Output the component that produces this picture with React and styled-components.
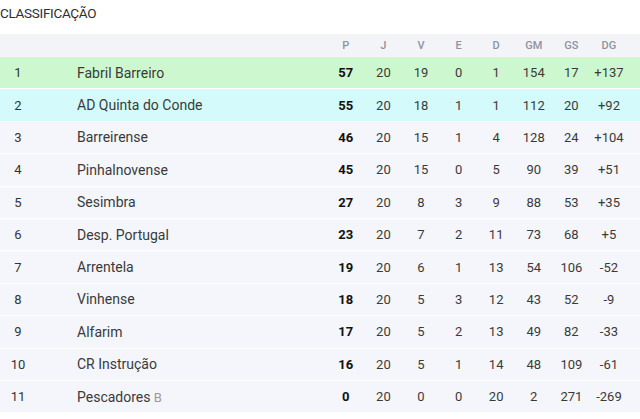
import React from 'react'
import styled, { createGlobalStyle } from 'styled-components'

const GlobalStyle = createGlobalStyle`
  body {
    margin: 0;
    background: #fff;
    font-family: Roboto, "Liberation Sans", sans-serif;
    color: #333;
  }
`

const Wrap = styled.div`
  width: 640px;
`

const Title = styled.h2`
  margin: 0;
  padding: 5px 0 0 0;
  height: 34px;
  box-sizing: border-box;
  font-size: 13.5px;
  font-weight: 400;
  color: #2e2e2e;
  letter-spacing: -0.3px;
`

const Grid = styled.div`
  display: grid;
  grid-template-columns: 36px 291px repeat(8, 37.6px) 1fr;
  align-items: center;
  height: ${p => p.$h};
  background: ${p => p.$bg};
  border-bottom: 1px solid ${p => p.$line || 'transparent'};
  box-sizing: border-box;
`

const HeadCell = styled.div`
  text-align: center;
  font-size: 11px;
  font-weight: 500;
  color: #8d929e;
`

const Pos = styled.div`
  text-align: center;
  font-size: 13px;
  color: #333;
`

const Team = styled.div`
  padding-left: 41px;
  font-size: 14px;
  color: #3a3a3a;
`

const Tag = styled.span`
  color: #9a9a9a;
  font-size: 13px;
`

const Num = styled.div`
  text-align: center;
  font-size: 13px;
  color: #3a3a3a;
  font-weight: ${p => (p.$bold ? 700 : 400)};
  ${p => p.$bold && 'color: #111;'}
`

const rows = [
  [1, 'Fabril Barreiro', 57, 20, 19, 0, 1, 154, 17, '+137'],
  [2, 'AD Quinta do Conde', 55, 20, 18, 1, 1, 112, 20, '+92'],
  [3, 'Barreirense', 46, 20, 15, 1, 4, 128, 24, '+104'],
  [4, 'Pinhalnovense', 45, 20, 15, 0, 5, 90, 39, '+51'],
  [5, 'Sesimbra', 27, 20, 8, 3, 9, 88, 53, '+35'],
  [6, 'Desp. Portugal', 23, 20, 7, 2, 11, 73, 68, '+5'],
  [7, 'Arrentela', 19, 20, 6, 1, 13, 54, 106, '-52'],
  [8, 'Vinhense', 18, 20, 5, 3, 12, 43, 52, '-9'],
  [9, 'Alfarim', 17, 20, 5, 2, 13, 49, 82, '-33'],
  [10, 'CR Instrução', 16, 20, 5, 1, 14, 48, 109, '-61'],
  [11, 'Pescadores', 0, 20, 0, 0, 20, 2, 271, '-269', 'B'],
]

const rowBg = pos => (pos === 1 ? '#cdf8cf' : pos === 2 ? '#d4fafc' : '#f4f6fc')

export default function App() {
  return (
    <Wrap>
      <GlobalStyle />
      <Title>CLASSIFICAÇÃO</Title>
      <Grid $h="23px" $bg="#f3f4f8">
        <div />
        <div />
        {['P', 'J', 'V', 'E', 'D', 'GM', 'GS', 'DG'].map(h => (
          <HeadCell key={h}>{h}</HeadCell>
        ))}
      </Grid>
      {rows.map(([pos, name, p, j, v, e, d, gm, gs, dg, tag]) => (
        <Grid key={pos} $h="32.4px" $bg={rowBg(pos)} $line="#ffffff">
          <Pos>{pos}</Pos>
          <Team>
            {name}
            {tag && <Tag> {tag}</Tag>}
          </Team>
          <Num $bold>{p}</Num>
          <Num>{j}</Num>
          <Num>{v}</Num>
          <Num>{e}</Num>
          <Num>{d}</Num>
          <Num>{gm}</Num>
          <Num>{gs}</Num>
          <Num>{dg}</Num>
        </Grid>
      ))}
    </Wrap>
  )
}
